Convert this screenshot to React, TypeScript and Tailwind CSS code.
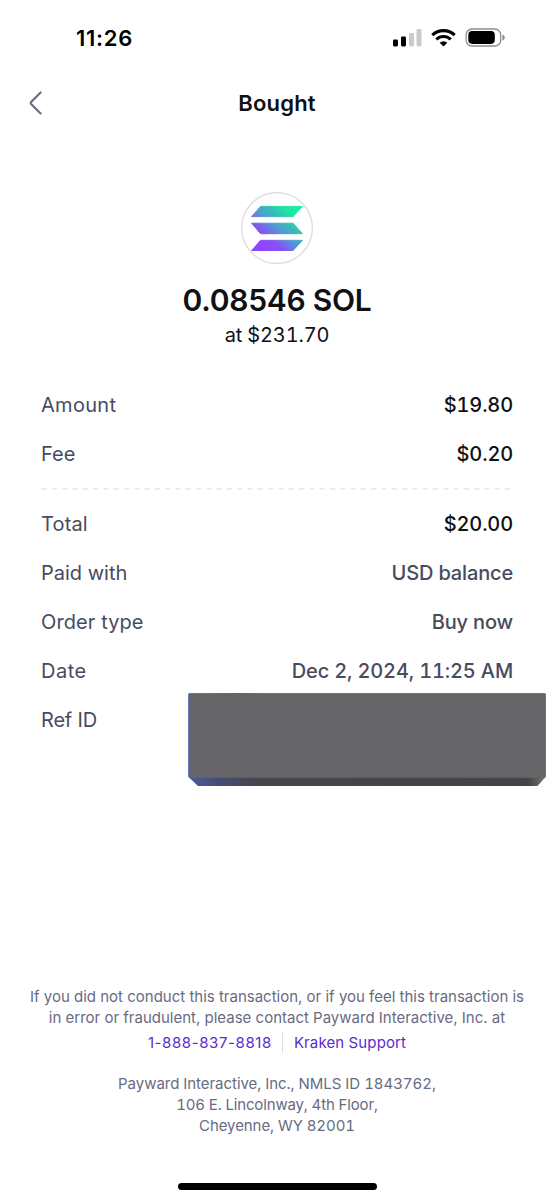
import clsx from "clsx";

type RowProps = {
  label: string;
  value?: string;
  strong?: boolean;
  labelClass?: string;
};

const summary: RowProps[] = [
  { label: "Amount", value: "$19.80", strong: true, labelClass: "tracking-[0.3px]" },
  { label: "Fee", value: "$0.20", strong: true },
];

const details: RowProps[] = [
  { label: "Total", value: "$20.00", strong: true, labelClass: "tracking-[0.15px]" },
  { label: "Paid with", value: "USD balance" },
  { label: "Order type", value: "Buy now", labelClass: "tracking-[0.1px]" },
  { label: "Date", value: "Dec 2, 2024, 11:25 AM", labelClass: "tracking-[0.5px]" },
];

function StatusBar() {
  return (
    <div className="flex h-[76px] items-center justify-between pl-[76px] pr-[48px]">
      <span className="text-[22px] font-semibold leading-7 tracking-[0.7px] text-black">11:26</span>
      <div className="flex items-center">
        <svg width="29" height="20" viewBox="0 0 29 20">
          <rect x="0" y="11.5" width="5" height="7" rx="1.4" fill="#000" />
          <rect x="8" y="8.5" width="5" height="10" rx="1.4" fill="#000" />
          <rect x="16" y="5" width="5" height="13.5" rx="1.4" fill="#cbcbcb" />
          <rect x="23.5" y="1" width="5" height="17.5" rx="1.4" fill="#cbcbcb" />
        </svg>
        <svg className="ml-[9px]" width="25" height="18" viewBox="0 0 25 18">
          <g fill="none" stroke="#000" strokeWidth="3.2">
            <path d="M1.3 6.2a16.2 16.2 0 0 1 22.4 0" />
            <path d="M5.3 10.4a10.4 10.4 0 0 1 14.4 0" />
          </g>
          <path d="M12.5 17.5 8.7 13.8a5.5 5.5 0 0 1 7.6 0z" fill="#000" />
        </svg>
        <svg className="ml-[9px]" width="41" height="20" viewBox="0 0 41 20">
          <rect x="1.1" y="1" width="34.6" height="17" rx="5.8" fill="none" stroke="#8d8d8d" strokeWidth="1.3" />
          <rect x="3.3" y="3.1" width="26.5" height="12.8" rx="3.8" fill="#000" />
          <path d="M37.4 6.5c1.6.5 2.4 1.6 2.4 3s-.8 2.5-2.4 3z" fill="#8d8d8d" />
        </svg>
      </div>
    </div>
  );
}

function Header() {
  return (
    <header className="grid h-[54px] grid-cols-[1fr_auto_1fr] items-center px-[28px]">
      <svg width="15" height="26" viewBox="0 0 15 26" fill="none">
        <path
          d="M12.6 2.4 3.1 12Q2.2 13 3.1 14l9.5 9.6"
          stroke="#686b82"
          strokeWidth="2.1"
          strokeLinecap="round"
        />
      </svg>
      <h1 className="text-[22px] font-semibold leading-7 tracking-[0.2px] text-[#101114]">Bought</h1>
    </header>
  );
}

function SolanaLogo() {
  return (
    <svg width="74" height="74" viewBox="0 0 74 74">
      <defs>
        <linearGradient id="sol" gradientUnits="userSpaceOnUse" x1="16" y1="60" x2="56" y2="13">
          <stop offset="0.1" stopColor="#9245ff" />
          <stop offset="0.3" stopColor="#8752f3" />
          <stop offset="0.5" stopColor="#5497d5" />
          <stop offset="0.66" stopColor="#36bcb5" />
          <stop offset="0.85" stopColor="#1de9a4" />
        </linearGradient>
      </defs>
      <circle cx="37" cy="37" r="35.4" fill="#fff" stroke="#d9d8e0" strokeWidth="1.2" />
      <g fill="url(#sol)" stroke="url(#sol)" strokeWidth="1" strokeLinejoin="round">
        <path d="M20.6 15.400h41.8l-9.3 10.2H11.6z" />
        <path d="M11.6 32.200h41.5l9.3 10.5H20.6z" />
        <path d="M20.6 49.300h41.8l-9.3 10.2H11.6z" />
      </g>
    </svg>
  );
}

function Row({ label, value, strong, labelClass }: RowProps) {
  return (
    <div className="flex h-[49px] items-center justify-between text-[20px] leading-7">
      <span className={clsx("text-[#484b5e]", labelClass)}>{label}</span>
      <span
        className={clsx(
          "font-medium tabular-nums tracking-[-0.15px]",
          strong ? "text-[#101114]" : "text-[#484b5e]",
        )}
      >
        {value}
      </span>
    </div>
  );
}

function RedactedBlock() {
  return (
    <svg className="absolute left-[147px] top-[-3px]" width="360" height="95" viewBox="0 0 360 95">
      <defs>
        <linearGradient id="bevel" x1="0" x2="1" y1="0" y2="0">
          <stop offset="0" stopColor="#4c5c9c" />
          <stop offset="0.08" stopColor="#454d78" />
          <stop offset="0.2" stopColor="#45454b" />
          <stop offset="0.95" stopColor="#444446" />
          <stop offset="1" stopColor="#77777a" />
        </linearGradient>
        <linearGradient id="edge" x1="0" x2="1" y1="0" y2="0">
          <stop offset="0" stopColor="#6479b8" />
          <stop offset="0.14" stopColor="#606272" />
          <stop offset="0.2" stopColor="#717173" />
        </linearGradient>
      </defs>
      <path d="M0 84.5h358l-8.5 9.5H10z" fill="url(#bevel)" />
      <rect x="0" y="1" width="358" height="84.5" rx="1.5" fill="url(#edge)" />
      <rect x="1" y="2" width="356" height="83.5" rx="1" fill="#656567" />
    </svg>
  );
}

export default function App() {
  return (
    <div className="flex h-[1200px] w-[554px] flex-col overflow-hidden bg-white font-['Inter',sans-serif]">
      <StatusBar />
      <Header />

      <section className="flex flex-col items-center pt-[61px]">
        <SolanaLogo />
        <p className="mt-[15px] text-[30px] font-semibold leading-10 tracking-[-0.25px] text-[#101114]">
          0.08546 SOL
        </p>
        <p className="mt-px text-[20px] leading-7 tracking-[-0.15px] tabular-nums text-[#101114]">at $231.70</p>
      </section>

      <section className="mt-[31px] px-[41px]">
        {summary.map((row) => (
          <Row key={row.label} {...row} />
        ))}
        <svg className="block" width="472" height="21" viewBox="0 0 472 21">
          <path d="M0.5 10.8H469" stroke="#e4e4e8" strokeWidth="1.3" strokeDasharray="5.2 5.1" />
        </svg>
        {details.map((row) => (
          <Row key={row.label} {...row} />
        ))}
        <div className="relative">
          <Row label="Ref ID" labelClass="tracking-[-0.2px]" />
          <RedactedBlock />
        </div>
      </section>

      <footer className="mt-auto flex flex-col items-center text-center text-[15px] leading-[21px] text-[#686b82]">
        <p>If you did not conduct this transaction, or if you feel this transaction is</p>
        <p>in error or fraudulent, please contact Payward Interactive, Inc. at</p>
        <div className="mt-[4px] flex items-center text-[#5b2bd0]">
          <a className="tracking-[0.6px]">1-888-837-8818</a>
          <span className="mx-[10.5px] h-[21px] w-px bg-[#dedee5]" />
          <a className="tracking-[0.12px]">Kraken Support</a>
        </div>
        <p className="mt-[20px] tracking-[-0.04px] tabular-nums">Payward Interactive, Inc., NMLS ID 1843762,</p>
        <p className="tracking-[-0.15px] tabular-nums">106 E. Lincolnway, 4th Floor,</p>
        <p className="tracking-[-0.08px] tabular-nums">Cheyenne, WY 82001</p>
        <div className="mt-[47px] mb-[10px] h-[7px] w-[199px] rounded-full bg-black" />
      </footer>
    </div>
  );
}
